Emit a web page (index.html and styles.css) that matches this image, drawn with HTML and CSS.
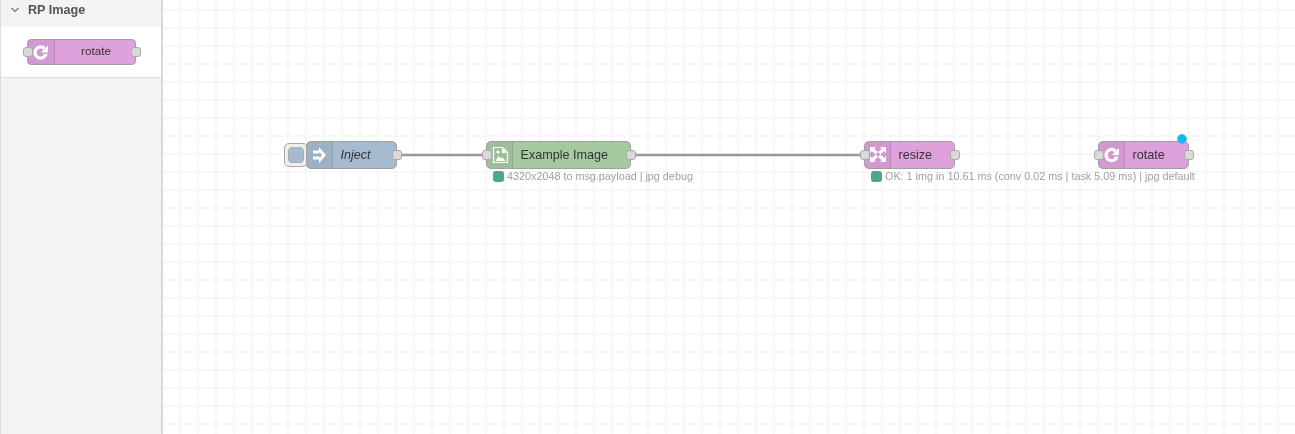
FILE: index.html
```html
<!DOCTYPE html>
<html lang="en">
    <head>
        <meta charset="UTF-8" />
        <title>Flow editor</title>
        <link rel="stylesheet" href="styles.css">
    </head>
    <body>
        <div class="palette">
            <div class="palette-header">
                <svg class="chevron" width="8" height="6" viewBox="0 0 8 6"><path d="M0.5 1 L4 4.5 L7.5 1" /></svg>
                <span>RP Image</span>
            </div>
            <div class="palette-body">
                <div class="palette-node">
                    <span class="port port-in"></span>
                    <span class="palette-icon">
                        <svg width="26" height="26" viewBox="0 0 26 26"><path class="icon-stroke" d="M16.500 8.500 A5.600 5.600 0 1 0 18 14" /><path class="icon-fill" d="M20 5.500 V12.500 H13 Z" /></svg>
                    </span>
                    <span class="palette-label">rotate</span>
                    <span class="port port-out"></span>
                </div>
            </div>
        </div>

        <div class="workspace">
            <svg class="wires" width="1132" height="434">
                <path d="M234 155 H324" />
                <path d="M468 155 H702" />
            </svg>

            <div class="inject-button"><span></span></div>
            <div class="node node-inject">
                <span class="node-icon">
                    <svg width="26" height="28" viewBox="0 0 26 28"><path class="icon-fill" d="M6 8.500 H12.500 V11.500 H6 Z M6 14.500 H12.500 V17.500 H6 Z M12 5 L19 13 L12 21 V17 L15 13 L12 9 Z" /></svg>
                </span>
                <span class="node-label label-italic">Inject</span>
                <span class="port port-out"></span>
            </div>

            <div class="node node-image">
                <span class="port port-in"></span>
                <span class="node-icon">
                    <svg width="26" height="28" viewBox="0 0 26 28"><path class="icon-line" d="M6.500 5.500 H15.500 L20.500 10.500 V20.500 H6.500 Z" /><path class="icon-fill" d="M15 6 V11 H20 Z M8.500 19 L11.500 14 L14 16.500 L15.500 15.500 L18.500 19 Z" /><circle class="icon-fill" cx="11" cy="10" r="1.600" /></svg>
                </span>
                <span class="node-label">Example Image</span>
                <span class="port port-out"></span>
            </div>
            <div class="status status-image"><i></i>4320x2048 to msg.payload | jpg debug</div>

            <div class="node node-resize">
                <span class="port port-in"></span>
                <span class="node-icon">
                    <svg width="26" height="28" viewBox="0 0 26 28"><path class="icon-fill" d="M5 5 H11 L5 11 Z M21 5 V11 L15 5 Z M5 20 V14 L11 20 Z M21 20 H15 L21 14 Z" /><path class="icon-arms" d="M6.500 6.500 L11.800 11.300 M19.500 6.500 L14.200 11.300 M6.500 18.500 L11.800 13.700 M19.500 18.500 L14.200 13.700" /></svg>
                </span>
                <span class="node-label">resize</span>
                <span class="port port-out"></span>
            </div>
            <div class="status status-resize"><i></i>OK: 1 img in 10.61 ms (conv 0.02 ms | task 5.09 ms) | jpg default</div>

            <div class="node node-rotate">
                <span class="port port-in"></span>
                <span class="node-icon">
                    <svg width="26" height="28" viewBox="0 0 26 28"><path class="icon-stroke" d="M16.500 9 A5.600 5.600 0 1 0 18 14.500" /><path class="icon-fill" d="M20 6 V13 H13 Z" /></svg>
                </span>
                <span class="node-label">rotate</span>
                <span class="port port-out"></span>
                <span class="changed-dot"></span>
            </div>
        </div>
    </body>
</html>
```

FILE: styles.css
```css
html, body {
    margin: 0;
    height: 100%;
    overflow: hidden;
}
body {
    display: flex;
    font-family: "Liberation Sans", Arial, sans-serif;
    color: #333;
    background: #fff;
}

/* palette on the left */
.palette {
    width: 160px;
    flex: none;
    background: #f3f3f3;
    border-left: 1px solid #ddd;
    border-right: 2px solid #d8d8d8;
    filter: blur(0.45px);
}
.palette-header {
    height: 27px;
    display: flex;
    align-items: center;
    gap: 9px;
    padding: 0 0 8px 10px;
    box-sizing: border-box;
    font-size: 12.600px;
    font-weight: bold;
    color: #555;
}
.chevron path {
    fill: none;
    stroke: #777;
    stroke-width: 1.2;
}
.palette-body {
    height: 51px;
    background: #fff;
    border-bottom: 1px solid #ddd;
    display: flex;
    justify-content: center;
    align-items: center;
    padding: 0 0 1px 1px;
    box-sizing: border-box;
}
.palette-node {
    position: relative;
    width: 109px;
    height: 26px;
    display: flex;
    align-items: center;
    background: #dea1dc;
    border: 1px solid #a0a0a0;
    border-radius: 4px;
    box-sizing: border-box;
}
.palette-icon {
    width: 27px;
    height: 100%;
    flex: none;
    background: rgba(0, 0, 0, 0.05);
    border-right: 1px solid rgba(0, 0, 0, 0.1);
    box-sizing: border-box;
    overflow: hidden;
}
.palette-label {
    flex: 1;
    text-align: center;
    font-size: 11.700px;
    padding-left: 2px;
    padding-bottom: 2px;
}

/* canvas with grid */
.workspace {
    position: relative;
    flex: 1;
    background-color: #fff;
    background-image:
        linear-gradient(#f7f7f7 2px, transparent 2px),
        linear-gradient(90deg, #f7f7f7 2px, transparent 2px);
    background-size: 18px 18px;
    background-position: 16px 9px;
    filter: blur(0.45px);
}
.wires {
    position: absolute;
    left: 0;
    top: 0;
}
.wires path {
    fill: none;
    stroke: #999;
    stroke-width: 2.700;
}

.node {
    position: absolute;
    top: 141px;
    height: 28px;
    display: flex;
    align-items: center;
    border: 1px solid #a0a0a0;
    border-radius: 5px;
    box-sizing: border-box;
}
.node-icon {
    width: 26px;
    height: 100%;
    flex: none;
    background: rgba(0, 0, 0, 0.05);
    border-right: 1px solid rgba(0, 0, 0, 0.1);
    box-sizing: border-box;
    overflow: hidden;
}
.node-label {
    flex: 1;
    padding-left: 7.500px;
    font-size: 12.600px;
    color: #333;
    white-space: nowrap;
}
.label-italic {
    font-style: italic;
}
.node-inject {
    left: 143px;
    width: 91px;
    background: #a6bbcf;
}
.node-image {
    left: 323px;
    width: 145px;
    background: #a6c9a2;
}
.node-resize {
    left: 701px;
    width: 91px;
    background: #dea1dc;
}
.node-rotate {
    left: 935px;
    width: 91px;
    background: #dea1dc;
}

.port {
    position: absolute;
    top: 50%;
    width: 10px;
    height: 10px;
    margin-top: -5px;
    background: #d9d9d9;
    border: 1px solid #aaa;
    border-radius: 3px;
    box-sizing: border-box;
}
.port-in {
    left: -5px;
}
.port-out {
    right: -6px;
}

.inject-button {
    position: absolute;
    left: 121px;
    top: 143px;
    width: 24px;
    height: 24px;
    padding: 3px;
    background: #eee;
    border: 1px solid #aaa;
    border-radius: 5px;
    box-sizing: border-box;
}
.inject-button span {
    display: block;
    width: 16px;
    height: 16px;
    background: #a6bbcf;
    border: 1px solid #aaa;
    border-radius: 4px;
    box-sizing: border-box;
}

.status {
    position: absolute;
    top: 170px;
    display: flex;
    align-items: center;
    gap: 3px;
    height: 12px;
    font-size: 10.800px;
    color: #a0a0a0;
    white-space: nowrap;
}
.status i {
    width: 11px;
    height: 11px;
    background: #4fa787;
    border-radius: 3px;
}
.status-image {
    left: 330px;
}
.status-resize {
    left: 708px;
}

.changed-dot {
    position: absolute;
    right: 1px;
    top: -8px;
    width: 10px;
    height: 10px;
    background: #00bcff;
    border: 1px solid #8aa;
    border-radius: 50%;
    box-sizing: border-box;
}

.icon-fill {
    fill: #fff;
}
.icon-stroke {
    fill: none;
    stroke: #fff;
    stroke-width: 3.200;
}
.icon-line {
    fill: none;
    stroke: #fff;
    stroke-width: 1.200;
}
.icon-arms {
    fill: none;
    stroke: #fff;
    stroke-width: 3.200;
}
```
